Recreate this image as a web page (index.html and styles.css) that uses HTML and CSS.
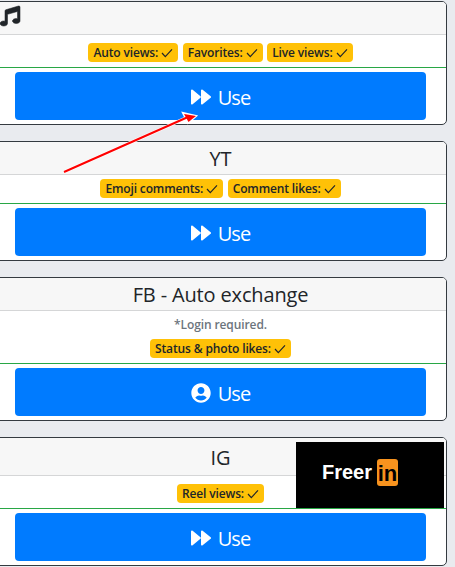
FILE: index.html
```html
<!DOCTYPE html>
<html lang="en">
<head>
    <meta charset="UTF-8">
    <meta name="viewport" content="width=device-width, initial-scale=1.0">
    <title>Tools</title>
    <link rel="stylesheet" href="styles.css">
</head>
<body>
    <svg width="0" height="0" class="defs">
        <symbol id="icon-check" viewBox="0 0 12 10"><polyline points="1,5 4.3,8.6 11,1.4" fill="none" stroke="currentColor" stroke-width="1.2"/></symbol>
        <symbol id="icon-forward" viewBox="0 0 20 16"><path d="M1 1.5 L8.8 8 L1 14.5 Z M11 1.5 L19 8 L11 14.5 Z" fill="currentColor" stroke="currentColor" stroke-width="2" stroke-linejoin="round"/></symbol>
        <symbol id="icon-user" viewBox="0 0 496 512"><path fill="currentColor" d="M248 8C111 8 0 119 0 256s111 248 248 248 248-111 248-248S385 8 248 8zm0 96c48.6 0 88 39.4 88 88s-39.4 88-88 88-88-39.4-88-88 39.4-88 88-88zm0 344c-58.7 0-111.3-26.6-146.5-68.2 18.8-35.4 55.6-59.8 98.5-59.8 2.4 0 4.8.4 7.1 1.1 13 4.2 26.6 6.9 40.9 6.9 14.3 0 28-2.7 40.9-6.9 2.3-.7 4.7-1.1 7.1-1.1 42.9 0 79.7 24.4 98.5 59.8C359.3 421.4 306.7 448 248 448z"/></symbol>
    </svg>

    <div class="container">
        <!-- Music -->
        <div class="card">
            <div class="card-header header-left">
                <svg class="music-icon" viewBox="0 0 512 512"><path fill="currentColor" stroke="currentColor" stroke-width="14" d="M470.38 1.51L150.41 96A32 32 0 0 0 128 126.51v261.41A139 139 0 0 0 96 384c-53 0-96 28.66-96 64s43 64 96 64 96-28.66 96-64V214.32l256-75v184.61a138.4 138.4 0 0 0-32-3.93c-53 0-96 28.66-96 64s43 64 96 64 96-28.66 96-64V32a32 32 0 0 0-41.62-30.49z"/></svg>
            </div>
            <div class="card-body body-roomy">
                <div class="badges">
                    <span class="badge">Auto views: <svg class="check"><use href="#icon-check"/></svg></span>
                    <span class="badge">Favorites: <svg class="check"><use href="#icon-check"/></svg></span>
                    <span class="badge">Live views: <svg class="check"><use href="#icon-check"/></svg></span>
                </div>
            </div>
            <div class="card-footer">
                <a class="btn"><svg class="btn-icon"><use href="#icon-forward"/></svg> Use</a>
            </div>
        </div>

        <!-- YT -->
        <div class="card">
            <div class="card-header">YT</div>
            <div class="card-body">
                <div class="badges">
                    <span class="badge">Emoji comments: <svg class="check"><use href="#icon-check"/></svg></span>
                    <span class="badge">Comment likes: <svg class="check"><use href="#icon-check"/></svg></span>
                </div>
            </div>
            <div class="card-footer">
                <a class="btn"><svg class="btn-icon"><use href="#icon-forward"/></svg> Use</a>
            </div>
        </div>

        <!-- FB -->
        <div class="card">
            <div class="card-header">FB - Auto exchange</div>
            <div class="card-body">
                <p class="note">*Login required.</p>
                <div class="badges">
                    <span class="badge">Status &amp; photo likes: <svg class="check"><use href="#icon-check"/></svg></span>
                </div>
            </div>
            <div class="card-footer">
                <a class="btn"><svg class="btn-icon"><use href="#icon-user"/></svg> Use</a>
            </div>
        </div>

        <!-- IG -->
        <div class="card">
            <div class="card-header header-tall">IG</div>
            <div class="card-body body-roomy">
                <div class="badges">
                    <span class="badge">Reel views: <svg class="check"><use href="#icon-check"/></svg></span>
                </div>
            </div>
            <div class="card-footer">
                <a class="btn"><svg class="btn-icon"><use href="#icon-forward"/></svg> Use</a>
            </div>
        </div>
    </div>

    <!-- Annotation arrow drawn over the page -->
    <svg class="arrow" viewBox="0 0 144 66">
        <path d="M4 62 L126 8" stroke="#fff" stroke-width="3.4" fill="none"/>
        <path d="M136 6 L123 3 L128 13 Z" fill="#fff" stroke="#fff" stroke-width="2"/>
        <path d="M4 62 L128 7" stroke="#f00" stroke-width="2" fill="none"/>
        <path d="M136 6 L124 4 L128.5 12 Z" fill="#f00"/>
    </svg>

    <!-- Ad over the last card -->
    <div class="ad">
        <span class="ad-name">Freer</span><span class="ad-mark">in</span>
    </div>
</body>
</html>
```

FILE: styles.css
```css
* {
    margin: 0;
    padding: 0;
    box-sizing: border-box;
}

html, body {
    height: 100%;
    overflow: hidden;
}

body {
    position: relative;
    font-family: 'Open Sans', 'Noto Sans', sans-serif;
    background: #e9ebef;
    color: #212529;
}

.defs {
    position: absolute;
}

.container {
    display: flex;
    flex-direction: column;
    gap: 16px;
    width: 453px;
    margin: 1px 0 0 -6px;
}

.card {
    background: white;
    border: 1px solid #343a40;
    border-radius: 5px;
    overflow: hidden;
}

.card-header {
    height: 33px;
    background: #f7f7f7;
    border-bottom: 1px solid #d5d6d7;
    font-size: 20px;
    line-height: 34px;
    text-align: center;
    letter-spacing: -0.15px;
}

.header-left {
    padding: 4px 0 0 5px;
    text-align: left;
}

.header-tall {
    height: 38px;
    line-height: 39px;
}

.music-icon {
    display: block;
    width: 20px;
    height: 20px;
    overflow: visible;
}

.card-body {
    padding: 4px 0 5px;
}

.body-roomy {
    padding-top: 8px;
}

.note {
    height: 24px;
    font-size: 12px;
    font-weight: 600;
    line-height: 20px;
    text-align: center;
    color: #6c757d;
    letter-spacing: -0.1px;
}

.badges {
    display: flex;
    justify-content: center;
    gap: 4.5px;
}

.badge {
    display: flex;
    align-items: center;
    gap: 3px;
    height: 19px;
    padding: 0 5px;
    background: #ffc107;
    border-radius: 4px;
    font-size: 12px;
    font-weight: 600;
    letter-spacing: -0.14px;
    white-space: nowrap;
}

.check {
    width: 12px;
    height: 10px;
}

.card-footer {
    padding: 4px 20px;
    border-top: 1px solid #28a745;
}

.btn {
    display: flex;
    justify-content: center;
    align-items: center;
    gap: 7px;
    height: 48px;
    padding-top: 2px;
    background: #007bff;
    color: white;
    border-radius: 4px;
    font-size: 20px;
    letter-spacing: -0.9px;
}

.btn-icon {
    width: 20px;
    height: 20px;
}

.arrow {
    position: absolute;
    left: 60px;
    top: 110px;
    width: 144px;
    height: 66px;
}

.ad {
    position: absolute;
    left: 296px;
    top: 442px;
    width: 148px;
    height: 66px;
    display: flex;
    align-items: center;
    padding: 0 0 5px 26px;
    gap: 5px;
    background: black;
    color: white;
    font-family: 'Liberation Sans', sans-serif;
}

.ad-name {
    font-size: 20px;
    font-weight: 700;
}

.ad-mark {
    width: 21px;
    height: 27px;
    background: #f7931e;
    border-radius: 3px;
    color: black;
    font-size: 22px;
    font-weight: 700;
    line-height: 29px;
    text-align: center;
}
```
